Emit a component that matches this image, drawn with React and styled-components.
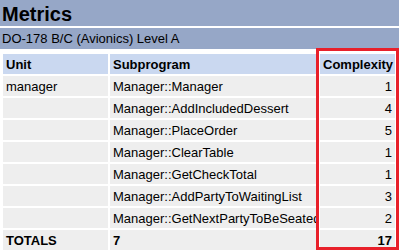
import React from 'react';
import styled, { createGlobalStyle } from 'styled-components';

const GlobalStyle = createGlobalStyle`
  html, body {
    margin: 0;
    padding: 0;
    background: #fff;
  }
  body {
    font-family: "Liberation Sans", Arial, sans-serif;
    color: #000;
  }
`;

const Page = styled.div`
  position: relative;
  width: 399px;
  height: 251px;
  overflow: hidden;
`;

const Title = styled.h1`
  margin: 0;
  height: 26px;
  padding: 0 2px;
  background: #96a7c7;
  font-size: 20px;
  font-weight: bold;
  line-height: 28px;
`;

const Subtitle = styled.div`
  margin-top: 2px;
  height: 21px;
  padding: 0 2px;
  background: #96a7c7;
  font-size: 13px;
  line-height: 21px;
`;

const Table = styled.table`
  margin: 3px 0 0 1px;
  width: 396px;
  border-collapse: separate;
  border-spacing: 2px;
  table-layout: fixed;
  font-size: 13px;
`;

const Col = styled.col`
  width: ${({ $w }) => $w}px;
`;

const Th = styled.th`
  height: 20px;
  padding: 0 3px;
  background: #cad8f0;
  text-align: left;
  font-weight: bold;
  white-space: nowrap;
  overflow: hidden;
`;

const Td = styled.td`
  height: 20px;
  padding: 0 3px;
  background: #eeeeee;
  text-align: ${({ $num }) => ($num ? 'right' : 'left')};
  font-weight: ${({ $bold }) => ($bold ? 'bold' : 'normal')};
  white-space: nowrap;
  overflow: hidden;
  vertical-align: middle;
`;

const Highlight = styled.div`
  position: absolute;
  left: 316px;
  top: 48px;
  width: 83px;
  height: 202px;
  box-sizing: border-box;
  border: 3px solid #e8202a;
  pointer-events: none;
`;

const rows = [
  ['manager', 'Manager::Manager', 1],
  ['', 'Manager::AddIncludedDessert', 4],
  ['', 'Manager::PlaceOrder', 5],
  ['', 'Manager::ClearTable', 1],
  ['', 'Manager::GetCheckTotal', 1],
  ['', 'Manager::AddPartyToWaitingList', 3],
  ['', 'Manager::GetNextPartyToBeSeated', 2],
];

export default function App() {
  return (
    <Page>
      <GlobalStyle />
      <Title>Metrics</Title>
      <Subtitle>DO-178 B/C (Avionics) Level A</Subtitle>
      <Table>
        <colgroup>
          <Col $w={105} />
          <Col $w={208} />
          <Col $w={75} />
        </colgroup>
        <thead>
          <tr>
            <Th>Unit</Th>
            <Th>Subprogram</Th>
            <Th>Complexity</Th>
          </tr>
        </thead>
        <tbody>
          {rows.map(([unit, sub, cx]) => (
            <tr key={sub}>
              <Td>{unit}</Td>
              <Td>{sub}</Td>
              <Td $num>{cx}</Td>
            </tr>
          ))}
          <tr>
            <Td $bold>TOTALS</Td>
            <Td $bold>7</Td>
            <Td $bold $num>17</Td>
          </tr>
        </tbody>
      </Table>
      <Highlight />
    </Page>
  );
}
